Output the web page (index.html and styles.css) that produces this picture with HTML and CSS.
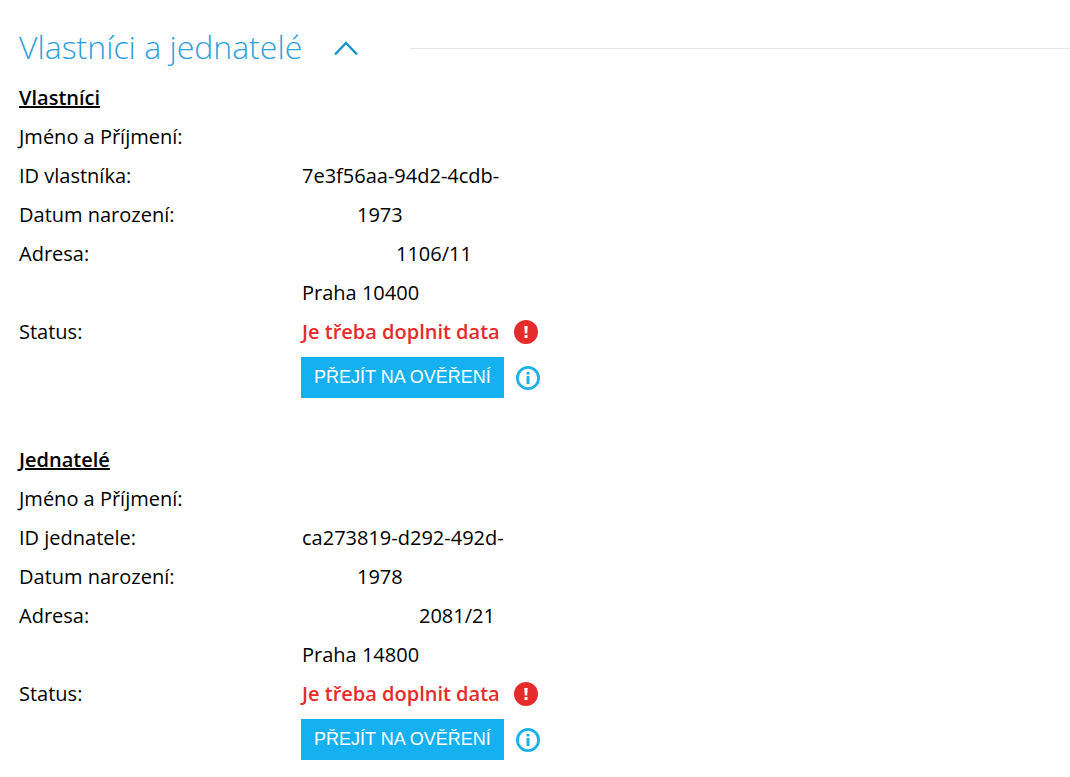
FILE: index.html
```html
<!DOCTYPE html>
<html lang="cs">
<head>
    <meta charset="UTF-8">
    <meta name="viewport" content="width=device-width, initial-scale=1.0">
    <title>Vlastníci a jednatelé</title>
    <link rel="stylesheet" href="styles.css">
</head>
<body>
    <section class="owners">
        <div class="section-header">
            <h1>Vlastníci a jednatelé</h1>
            <button class="toggle" type="button" aria-label="Sbalit" aria-expanded="true">
                <svg width="26" height="16" viewBox="0 0 26 16"><path d="M2 14.5 13 3l11 11.5" fill="none" stroke="#1593c9" stroke-width="2.4"/></svg>
            </button>
            <div class="line"></div>
        </div>

        <div class="person">
            <h2>Vlastníci</h2>
            <dl class="details">
                <dt>Jméno a Příjmení:</dt>
                <dd></dd>
                <dt>ID vlastníka:</dt>
                <dd>7e3f56aa-94d2-4cdb-</dd>
                <dt>Datum narození:</dt>
                <dd><span class="blank blank-date"></span>1973</dd>
                <dt>Adresa:</dt>
                <dd><span class="blank blank-street"></span>1106/11</dd>
                <dd>Praha 10400</dd>
                <dt>Status:</dt>
                <dd class="status">
                    Je třeba doplnit data
                    <svg class="icon" viewBox="0 0 24 24"><circle cx="12" cy="12" r="12" fill="#e52b2b"/><path d="M10.3 6h3.4l-.5 7.6h-2.4zM10.5 15h3v3h-3z" fill="#fff"/></svg>
                </dd>
            </dl>
            <div class="actions">
                <button class="btn" type="button">PŘEJÍT NA OVĚŘENÍ</button>
                <button class="info" type="button" aria-label="Informace">
                    <svg class="icon" viewBox="0 0 24 24"><circle cx="12" cy="12" r="10.6" fill="none" stroke="#1fb0e6" stroke-width="2.8"/><path d="M10.5 10h3v8h-3zM10.5 6h3v2.6h-3z" fill="#1fb0e6"/></svg>
                </button>
            </div>
        </div>

        <div class="person">
            <h2>Jednatelé</h2>
            <dl class="details">
                <dt>Jméno a Příjmení:</dt>
                <dd></dd>
                <dt>ID jednatele:</dt>
                <dd>ca273819-d292-492d-</dd>
                <dt>Datum narození:</dt>
                <dd><span class="blank blank-date"></span>1978</dd>
                <dt>Adresa:</dt>
                <dd><span class="blank blank-street-long"></span>2081/21</dd>
                <dd>Praha 14800</dd>
                <dt>Status:</dt>
                <dd class="status">
                    Je třeba doplnit data
                    <svg class="icon" viewBox="0 0 24 24"><circle cx="12" cy="12" r="12" fill="#e52b2b"/><path d="M10.3 6h3.4l-.5 7.6h-2.4zM10.5 15h3v3h-3z" fill="#fff"/></svg>
                </dd>
            </dl>
            <div class="actions">
                <button class="btn" type="button">PŘEJÍT NA OVĚŘENÍ</button>
                <button class="info" type="button" aria-label="Informace">
                    <svg class="icon" viewBox="0 0 24 24"><circle cx="12" cy="12" r="10.6" fill="none" stroke="#1fb0e6" stroke-width="2.8"/><path d="M10.5 10h3v8h-3zM10.5 6h3v2.6h-3z" fill="#1fb0e6"/></svg>
                </button>
            </div>
        </div>
    </section>
</body>
</html>
```
FILE: styles.css
```css
* {
    margin: 0;
    padding: 0;
    box-sizing: border-box;
}

body {
    font-family: 'Open Sans', 'Noto Sans', sans-serif;
    font-size: 20px;
    line-height: 39px;
    color: #000;
    background: #fff;
}

.owners {
    padding: 18px 0 0 19px;
}

.section-header {
    display: flex;
    align-items: center;
    height: 60px;
}

.section-header h1 {
    padding-bottom: 4px;
    font-size: 32px;
    font-weight: 300;
    color: #2f9fdb;
}

.toggle {
    display: flex;
    margin-left: 31px;
    background: none;
    border: none;
    cursor: pointer;
}

.line {
    flex: 1;
    height: 1px;
    margin-left: 51px;
    background: #e6e6e6;
}

.person {
    margin-bottom: 42px;
}

.person h2 {
    font-size: 20px;
    font-weight: 600;
    text-decoration: underline;
}

.details {
    display: grid;
    grid-template-columns: 283px 1fr;
    grid-auto-rows: 39px;
}

.details dd {
    grid-column: 2;
}

.blank {
    display: inline-block;
}

.blank-date {
    width: 55px;
}

.blank-street {
    width: 94px;
}

.blank-street-long {
    width: 117px;
}

.details .status {
    display: flex;
    align-items: center;
    gap: 14px;
    font-weight: 600;
    color: #e52b2b;
}

.icon {
    display: block;
    width: 24px;
    height: 24px;
}

.actions {
    display: flex;
    align-items: center;
    gap: 12px;
    margin-left: 282px;
    padding-top: 6px;
}

.btn {
    height: 41px;
    padding: 0 13px;
    font-family: 'Liberation Sans', Arial, sans-serif;
    font-size: 18px;
    color: #fff;
    background: #14b0ef;
    border: none;
    cursor: pointer;
}

.info {
    background: none;
    border: none;
    cursor: pointer;
}
```
